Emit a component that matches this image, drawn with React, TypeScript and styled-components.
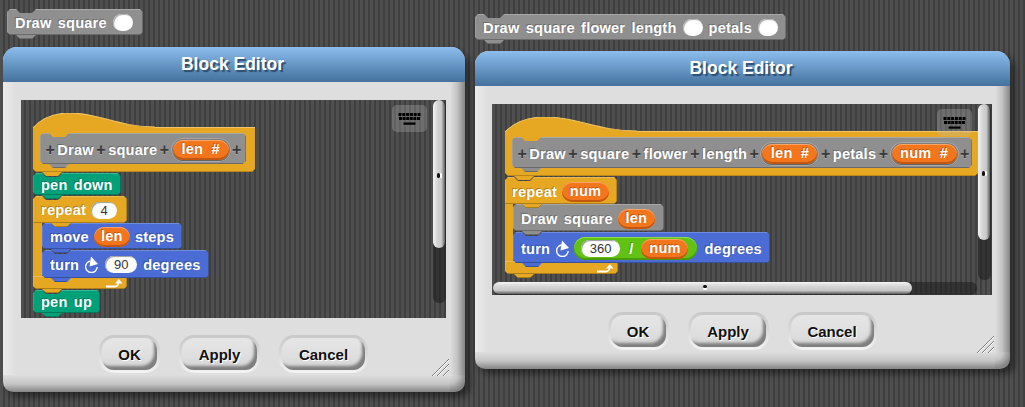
import React from 'react';
import styled, { createGlobalStyle, css } from 'styled-components';

const GlobalStyle = createGlobalStyle`
  html, body {
    margin: 0;
    padding: 0;
  }
  body {
    width: 1025px;
    height: 407px;
    overflow: hidden;
    font-family: "Liberation Sans", Arial, sans-serif;
  }
`;

const stripes = css`
  background-color: #484848;
  background-image: repeating-linear-gradient(
    to right,
    #4f4f4f 0,
    #4f4f4f 3px,
    #3f3f3f 3px,
    #3f3f3f 5px
  );
`;

const Desktop = styled.div`
  ${stripes}
  position: relative;
  width: 1025px;
  height: 407px;
  overflow: hidden;
`;

// notch on top, bump on the bottom; the box keeps 4px of padding for the bump
const blockClip = `polygon(
  0 3px, 3px 0,
  9px 0, 13px 4px, 25px 4px, 29px 0,
  calc(100% - 3px) 0, 100% 3px,
  100% calc(100% - 7px), calc(100% - 3px) calc(100% - 4px),
  29px calc(100% - 4px), 25px 100%, 13px 100%, 9px calc(100% - 4px),
  3px calc(100% - 4px), 0 calc(100% - 7px)
)`;

const blockFill = (color: string) => `
  background: linear-gradient(
    to bottom,
    rgba(255, 255, 255, 0.22) 0,
    rgba(255, 255, 255, 0.22) 1px,
    transparent 1px,
    transparent calc(100% - 5px),
    rgba(0, 0, 0, 0.25) calc(100% - 5px),
    rgba(0, 0, 0, 0.25) calc(100% - 4px),
    transparent calc(100% - 4px),
    transparent calc(100% - 1px),
    rgba(0, 0, 0, 0.25) calc(100% - 1px)
  ), ${color};
  box-shadow: inset 1px 0 0 rgba(255, 255, 255, 0.12), inset -1px 0 0 rgba(0, 0, 0, 0.2);
`;

const COLORS = {
  gray: '#8f8f8f',
  blue: '#4a6cd4',
  teal: '#00a178',
  gold: '#e6a822',
  orange: '#f3761d',
  green: '#62c213',
};

const Block = styled.div<{ $color: string; $h: number; $z?: number; $pad?: number; $padL?: number; $top?: number }>`
  ${(p) => blockFill(p.$color)}
  position: relative;
  z-index: ${(p) => p.$z ?? 1};
  box-sizing: border-box;
  display: flex;
  align-items: center;
  width: fit-content;
  height: ${(p) => p.$h + 4}px;
  margin-bottom: -3px;
  padding: ${(p) => p.$top ?? 2}px ${(p) => p.$pad ?? 8}px 5px ${(p) => p.$padL ?? 8}px;
  clip-path: ${blockClip};
  color: #fff;
  font-size: 14.5px;
  font-weight: bold;
  letter-spacing: 0.25px;
  word-spacing: 2px;
  white-space: nowrap;
  text-shadow: -1px -1px 0 rgba(0, 0, 0, 0.25);
`;

const Floating = styled(Block)<{ $x: number; $y: number }>`
  position: absolute;
  left: ${(p) => p.$x}px;
  top: ${(p) => p.$y}px;
  margin: 0;
`;

const BlankSlot = styled.span`
  display: inline-block;
  box-sizing: border-box;
  width: 20px;
  height: 17px;
  margin: 0 6px;
  border-radius: 9px;
  background: #fff;
  box-shadow: inset 1px 1px 1px #aaa;
`;

const NumberSlot = styled.span<{ $w: number }>`
  display: inline-block;
  box-sizing: border-box;
  width: ${(p) => p.$w}px;
  height: 17px;
  margin: 0 6px 0 5px;
  border-radius: 9px;
  background: #fff;
  box-shadow: inset 1px 1px 1px #999;
  color: #333;
  font-size: 13px;
  font-weight: normal;
  letter-spacing: 0;
  line-height: 17px;
  text-align: center;
  text-shadow: none;
`;

const Reporter = styled.span<{ $w: number; $h?: number }>`
  display: inline-block;
  box-sizing: border-box;
  width: ${(p) => p.$w}px;
  height: ${(p) => p.$h ?? 20}px;
  margin: 0 5px;
  border-radius: 10px;
  background: ${COLORS.orange};
  box-shadow: inset 0 -2px 0 #c2570f, inset 0 1px 0 #f9a468;
  line-height: ${(p) => (p.$h ?? 20) - 2}px;
  text-align: center;
`;

const Plus = styled.span`
  margin: 0 1.5px;
  color: #3a3a3a;
  font-size: 16px;
  font-weight: bold;
  letter-spacing: 0;
  text-shadow: 0 1px 0 rgba(255, 255, 255, 0.2);
`;

const ParamRing = styled.span`
  display: inline-flex;
  align-items: center;
  justify-content: center;
  box-sizing: border-box;
  height: 24px;
  padding: 0 2px;
  border-radius: 12px;
  background: #7c7c7c;
  box-shadow: inset 0 0 0 1px #a8a8a8, inset 0 -2px 0 #666;
`;

const ParamPill = styled(Reporter)`
  margin: 0;
  word-spacing: 4px;
`;

const OperatorRing = styled.span`
  display: inline-flex;
  align-items: center;
  box-sizing: border-box;
  height: 23px;
  margin: 0 7px 0 3px;
  padding: 0 9px 0 7px;
  border-radius: 12px;
  background: ${COLORS.green};
  box-shadow: inset 0 -2px 0 #4a9a0c, inset 0 1px 0 #8fdc4f;
`;

const OperatorSign = styled.span`
  margin: 0 8px 0 9px;
`;

const InnerSlot = styled(NumberSlot)`
  margin: 0;
`;

const InnerReporter = styled(Reporter)`
  margin: 0;
`;

const Hat = styled.div`
  display: flex;
  flex-direction: column;
  position: relative;
  z-index: 9;
  margin-bottom: -3px;
`;

const HatCap = styled.svg`
  position: relative;
  z-index: 1;
  display: block;
  margin-bottom: -1px;
`;

const HatBody = styled.div<{ $w: number }>`
  box-sizing: border-box;
  display: flex;
  width: ${(p) => p.$w}px;
  height: 49px;
  padding: 6px 0 0 7px;
  background: linear-gradient(
    to bottom,
    #f2c565 0,
    #f2c565 1px,
    transparent 1px,
    transparent calc(100% - 5px),
    rgba(0, 0, 0, 0.2) calc(100% - 5px),
    rgba(0, 0, 0, 0.2) calc(100% - 4px),
    transparent calc(100% - 4px)
  ), ${COLORS.gold};
  clip-path: polygon(
    0 0,
    100% 0,
    100% calc(100% - 7px),
    calc(100% - 3px) calc(100% - 4px),
    29px calc(100% - 4px),
    25px 100%,
    13px 100%,
    9px calc(100% - 4px),
    3px calc(100% - 4px),
    0 calc(100% - 7px)
  );
`;

const ProtoWord = styled.span`
  margin: 0 1px;
`;

const Loop = styled.div<{ $z: number }>`
  position: relative;
  z-index: ${(p) => p.$z};
  display: flex;
  flex-direction: column;
  width: fit-content;
  margin-bottom: -3px;
`;

const LoopArm = styled(Block)<{ $spine: number }>`
  margin-bottom: 0;
  clip-path: polygon(
    0 3px, 3px 0,
    9px 0, 13px 4px, 25px 4px, 29px 0,
    calc(100% - 3px) 0, 100% 3px,
    100% calc(100% - 7px), calc(100% - 3px) calc(100% - 4px),
    ${(p) => p.$spine + 29}px calc(100% - 4px),
    ${(p) => p.$spine + 25}px 100%,
    ${(p) => p.$spine + 13}px 100%,
    ${(p) => p.$spine + 9}px calc(100% - 4px),
    0 calc(100% - 4px)
  );
`;

const LoopMiddle = styled.div`
  display: flex;
  margin-top: -4px;
`;

const Spine = styled.div<{ $w: number }>`
  flex: none;
  width: ${(p) => p.$w}px;
  background: ${COLORS.gold};
`;

const Nested = styled.div`
  position: relative;
  z-index: 2;
  display: flex;
  flex-direction: column;
`;

const LoopFoot = styled.div<{ $w: number }>`
  ${blockFill(COLORS.gold)}
  position: relative;
  z-index: 1;
  box-sizing: border-box;
  display: flex;
  justify-content: flex-end;
  align-items: flex-start;
  width: ${(p) => p.$w}px;
  height: 17px;
  margin-top: -3px;
  padding: 3px 3px 0 0;
  clip-path: polygon(
    0 0, 100% 0,
    100% calc(100% - 7px), calc(100% - 3px) calc(100% - 4px),
    29px calc(100% - 4px), 25px 100%, 13px 100%, 9px calc(100% - 4px),
    3px calc(100% - 4px), 0 calc(100% - 7px)
  );
`;

const TurnIcon = styled.svg`
  flex: none;
  margin: 0 1px 0 6px;
`;

const TurnArrow = () => (
  <TurnIcon width="14" height="17" viewBox="0 0 14 17">
    <path d="M5.5 5 A5.8 5.8 0 1 0 12.2 11" fill="none" stroke="#fff" strokeWidth="1.4" />
    <path d="M6 0.5 L13 8 L4.5 10.5 Z" fill="#fff" />
  </TurnIcon>
);

const LoopArrow = () => (
  <svg width="18" height="9" viewBox="0 0 18 9">
    <path d="M0 7.5 H9 Q12 7.5 12.5 3.5" fill="none" stroke="#fff" strokeWidth="1.8" />
    <path d="M9 4.5 L12.8 0 L16.5 4.5 Z" fill="#fff" />
  </svg>
);

const Dialog = styled.div<{ $x: number; $y: number; $w: number; $h: number }>`
  position: absolute;
  left: ${(p) => p.$x}px;
  top: ${(p) => p.$y}px;
  display: flex;
  flex-direction: column;
  width: ${(p) => p.$w}px;
  height: ${(p) => p.$h}px;
  border-radius: 14px 14px 10px 10px;
  box-shadow: 5px 5px 7px rgba(0, 0, 0, 0.45);
  background:
    radial-gradient(circle 16px at 0 0, #dedede 0, #c4c4c4 50%, #858585 100%) bottom right / 15px 17px no-repeat,
    linear-gradient(to left, #858585 0, #c4c4c4 8px, #dedede 15px) top right / 15px calc(100% - 17px) no-repeat,
    linear-gradient(to top, #858585 0, #c4c4c4 8px, #dedede 17px) bottom left / calc(100% - 15px) 17px no-repeat,
    linear-gradient(to right, #ebebeb 0, #dedede 13px) top left / 13px 100% no-repeat,
    #dedede;
`;

const TitleBar = styled.div`
  flex: none;
  height: 35px;
  padding-right: 3px;
  border-radius: 14px 14px 0 0;
  background: linear-gradient(to bottom, #8dbdec 0, #6f9fce 40%, #44719d 100%);
  color: #fff;
  font-size: 17.5px;
  font-weight: bold;
  line-height: 35px;
  text-align: center;
  text-shadow: 2px 2px 1px #2e4d6d;
`;

const DialogBody = styled.div<{ $left: number; $right: number }>`
  flex: 1;
  display: flex;
  flex-direction: column;
  padding: 18px ${(p) => p.$right}px 0 ${(p) => p.$left}px;
`;

const ScriptArea = styled.div<{ $h: number; $top: number; $left: number }>`
  ${stripes}
  position: relative;
  flex: none;
  height: ${(p) => p.$h}px;
  padding: ${(p) => p.$top}px 0 0 ${(p) => p.$left}px;
  box-sizing: border-box;
  overflow: hidden;
`;

const Track = styled.div<{ $vertical?: boolean; $length: number; $inset?: number }>`
  position: absolute;
  z-index: 15;
  border-radius: 6px;
  background: rgba(30, 30, 30, 0.55);
  ${(p) =>
    p.$vertical
      ? `top: 0; right: ${p.$inset ?? 0}px; width: 13px; height: ${p.$length}px;`
      : `left: ${p.$inset ?? 0}px; bottom: 0; height: 13px; width: ${p.$length}px;`}
`;

const Thumb = styled.div<{ $vertical?: boolean; $length: number }>`
  position: absolute;
  left: 0;
  ${(p) =>
    p.$vertical
      ? `top: 0; width: 12px; height: ${p.$length}px;
         background: linear-gradient(to right, #f4f4f4 0, #d6d6d6 35%, #c8c8c8 70%, #5e5e5e 100%);`
      : `top: 0; height: 12px; width: ${p.$length}px;
         background: linear-gradient(to bottom, #f4f4f4 0, #d6d6d6 35%, #c8c8c8 70%, #5e5e5e 100%);`}
  border-radius: 6px;
`;

const ThumbDot = styled.div<{ $vertical?: boolean }>`
  position: absolute;
  left: ${(p) => (p.$vertical ? '4px' : '50%')};
  top: ${(p) => (p.$vertical ? '49%' : '3px')};
  width: ${(p) => (p.$vertical ? '3px' : '4px')};
  height: ${(p) => (p.$vertical ? '5px' : '3px')};
  border-radius: 2px;
  background: #111;
  box-shadow: ${(p) => (p.$vertical ? '2px 0 0 #fff' : '0 2px 0 #fff')};
`;

const KeyboardButton = styled.div<{ $right: number; $top: number }>`
  position: absolute;
  z-index: 10;
  right: ${(p) => p.$right}px;
  top: ${(p) => p.$top}px;
  display: flex;
  align-items: center;
  justify-content: center;
  width: 35px;
  height: 27px;
  border-radius: 5px;
  background: rgba(190, 190, 190, 0.28);
`;

const KeyboardIcon = () => (
  <svg width="23" height="12" viewBox="0 0 23 12">
    <g fill="#000">
      {[0, 1, 2, 3, 4, 5].map((i) => (
        <rect key={`a${i}`} x={0.5 + i * 3.8} y="0" width="3" height="3" />
      ))}
      {[0, 1, 2, 3, 4, 5].map((i) => (
        <rect key={`b${i}`} x={1 + i * 3.6} y="4" width="3" height="3" />
      ))}
      <rect x="5.5" y="9.5" width="12" height="2.2" />
    </g>
  </svg>
);

const ButtonRow = styled.div`
  display: flex;
  justify-content: center;
  gap: 19px;
  margin-top: 17px;
`;

const ButtonRing = styled.div<{ $w: number }>`
  box-sizing: border-box;
  width: ${(p) => p.$w}px;
  height: 38px;
  padding: 3px;
  border-radius: 15px;
  background: linear-gradient(to bottom, #c8c8c8 0, #dadada 50%, #f4f4f4 100%);
`;

const Button = styled.div`
  box-sizing: border-box;
  height: 32px;
  border-radius: 12px;
  background: linear-gradient(to bottom, #e6e6e6 0, #dedede 60%, #d4d4d4 100%);
  box-shadow: inset -4px -5px 3px -1px #7e7e7e;
  color: #111;
  font-size: 15px;
  font-weight: bold;
  line-height: 33px;
  text-align: center;
  text-shadow: 1px 1px 0 #fff;
`;

const ResizeHandle = styled.svg`
  position: absolute;
  right: 15px;
  bottom: 15px;
`;

const ResizeLines = () => (
  <ResizeHandle width="19" height="19" viewBox="0 0 19 19">
    <g fill="none" strokeWidth="1">
      <path d="M1 18 L18 1" stroke="#7c7c7c" />
      <path d="M2 18 L18 2" stroke="#fff" />
      <path d="M6 18 L18 6" stroke="#7c7c7c" />
      <path d="M7 18 L18 7" stroke="#fff" />
      <path d="M12 18 L18 12" stroke="#7c7c7c" />
      <path d="M13 18 L18 13" stroke="#fff" />
    </g>
  </ResizeHandle>
);

const Buttons = () => (
  <ButtonRow>
    <ButtonRing $w={61}><Button>OK</Button></ButtonRing>
    <ButtonRing $w={81}><Button>Apply</Button></ButtonRing>
    <ButtonRing $w={89}><Button>Cancel</Button></ButtonRing>
  </ButtonRow>
);

const Cap = ({ w }: { w: number }) => (
  <HatCap width={w} height="15" viewBox="0 0 120 15" preserveAspectRatio="none">
    <path d="M0 15 C8 6 20 0 36 0 C66 0 84 14 120 14 L120 15 Z" fill={COLORS.gold} />
    <path d="M0 15 C8 6 20 0 36 0 C66 0 84 14 120 14" fill="none" stroke="#f2c565" strokeWidth="1" />
  </HatCap>
);

const Param = ({ label, w }: { label: string; w: number }) => (
  <ParamRing>
    <ParamPill $w={w}>{label}</ParamPill>
  </ParamRing>
);

const App: React.FC = () => (
  <Desktop>
    <GlobalStyle />

    <Floating $color={COLORS.gray} $h={26} $x={7} $y={9} $pad={4}>
      Draw square
      <BlankSlot />
    </Floating>
    <Floating $color={COLORS.gray} $h={26} $x={475} $y={14} $pad={2}>
      Draw square flower length
      <BlankSlot />
      petals
      <BlankSlot />
    </Floating>

    <Dialog $x={3} $y={47} $w={462} $h={345}>
      <TitleBar>Block Editor</TitleBar>
      <DialogBody $left={18} $right={19}>
        <ScriptArea $h={218} $top={13} $left={12}>
          <Hat>
            <Cap w={122} />
            <HatBody $w={222}>
              <Block $color={COLORS.gray} $h={31} $pad={3} $padL={4} $top={4}>
                <Plus>+</Plus>
                <ProtoWord>Draw</ProtoWord>
                <Plus>+</Plus>
                <ProtoWord>square</ProtoWord>
                <Plus>+</Plus>
                <Param label="len #" w={56} />
                <Plus>+</Plus>
              </Block>
            </HatBody>
          </Hat>
          <Block $color={COLORS.teal} $h={22} $z={8}>pen down</Block>
          <Loop $z={7}>
            <LoopArm $color={COLORS.gold} $h={27} $pad={4} $spine={9}>
              repeat
              <NumberSlot $w={26}>4</NumberSlot>
            </LoopArm>
            <LoopMiddle>
              <Spine $w={9} />
              <Nested>
                <Block $color={COLORS.blue} $h={26} $z={3}>
                  move <Reporter $w={36}>len</Reporter> steps
                </Block>
                <Block $color={COLORS.blue} $h={28} $z={2}>
                  turn
                  <TurnArrow />
                  <NumberSlot $w={32}>90</NumberSlot>
                  degrees
                </Block>
              </Nested>
            </LoopMiddle>
            <LoopFoot $w={94}>
              <LoopArrow />
            </LoopFoot>
          </Loop>
          <Block $color={COLORS.teal} $h={23} $z={6}>pen up</Block>

          <KeyboardButton $right={19} $top={5}>
            <KeyboardIcon />
          </KeyboardButton>
          <Track $vertical $length={203}>
            <Thumb $vertical $length={148}>
              <ThumbDot $vertical />
            </Thumb>
          </Track>
        </ScriptArea>
        <Buttons />
      </DialogBody>
      <ResizeLines />
    </Dialog>

    <Dialog $x={475} $y={51} $w={535} $h={318}>
      <TitleBar>Block Editor</TitleBar>
      <DialogBody $left={17} $right={18}>
        <ScriptArea $h={191} $top={13} $left={13}>
          <Hat>
            <Cap w={132} />
            <HatBody $w={473}>
              <Block $color={COLORS.gray} $h={31} $pad={1} $padL={4} $top={4}>
                <Plus>+</Plus>
                <ProtoWord>Draw</ProtoWord>
                <Plus>+</Plus>
                <ProtoWord>square</ProtoWord>
                <Plus>+</Plus>
                <ProtoWord>flower</ProtoWord>
                <Plus>+</Plus>
                <ProtoWord>length</ProtoWord>
                <Plus>+</Plus>
                <Param label="len #" w={55} />
                <Plus>+</Plus>
                <ProtoWord>petals</ProtoWord>
                <Plus>+</Plus>
                <Param label="num #" w={65} />
                <Plus>+</Plus>
              </Block>
            </HatBody>
          </Hat>
          <Loop $z={7}>
            <LoopArm $color={COLORS.gold} $h={27} $pad={3} $padL={7} $spine={8} $top={3}>
              repeat
              <Reporter $w={47}>num</Reporter>
            </LoopArm>
            <LoopMiddle>
              <Spine $w={8} />
              <Nested>
                <Block $color={COLORS.gray} $h={27} $z={3} $pad={4} $top={3}>
                  Draw square <Reporter $w={37}>len</Reporter>
                </Block>
                <Block $color={COLORS.blue} $h={31} $z={2} $top={3}>
                  turn
                  <TurnArrow />
                  <OperatorRing>
                    <InnerSlot $w={39}>360</InnerSlot>
                    <OperatorSign>/</OperatorSign>
                    <InnerReporter $w={47}>num</InnerReporter>
                  </OperatorRing>
                  degrees
                </Block>
              </Nested>
            </LoopMiddle>
            <LoopFoot $w={113}>
              <LoopArrow />
            </LoopFoot>
          </Loop>

          <KeyboardButton $right={20} $top={5}>
            <KeyboardIcon />
          </KeyboardButton>
          <Track $vertical $length={176} $inset={1}>
            <Thumb $vertical $length={136}>
              <ThumbDot $vertical />
            </Thumb>
          </Track>
          <Track $length={484} $inset={1}>
            <Thumb $length={419}>
              <ThumbDot />
            </Thumb>
          </Track>
        </ScriptArea>
        <Buttons />
      </DialogBody>
      <ResizeLines />
    </Dialog>
  </Desktop>
);

export default App;
